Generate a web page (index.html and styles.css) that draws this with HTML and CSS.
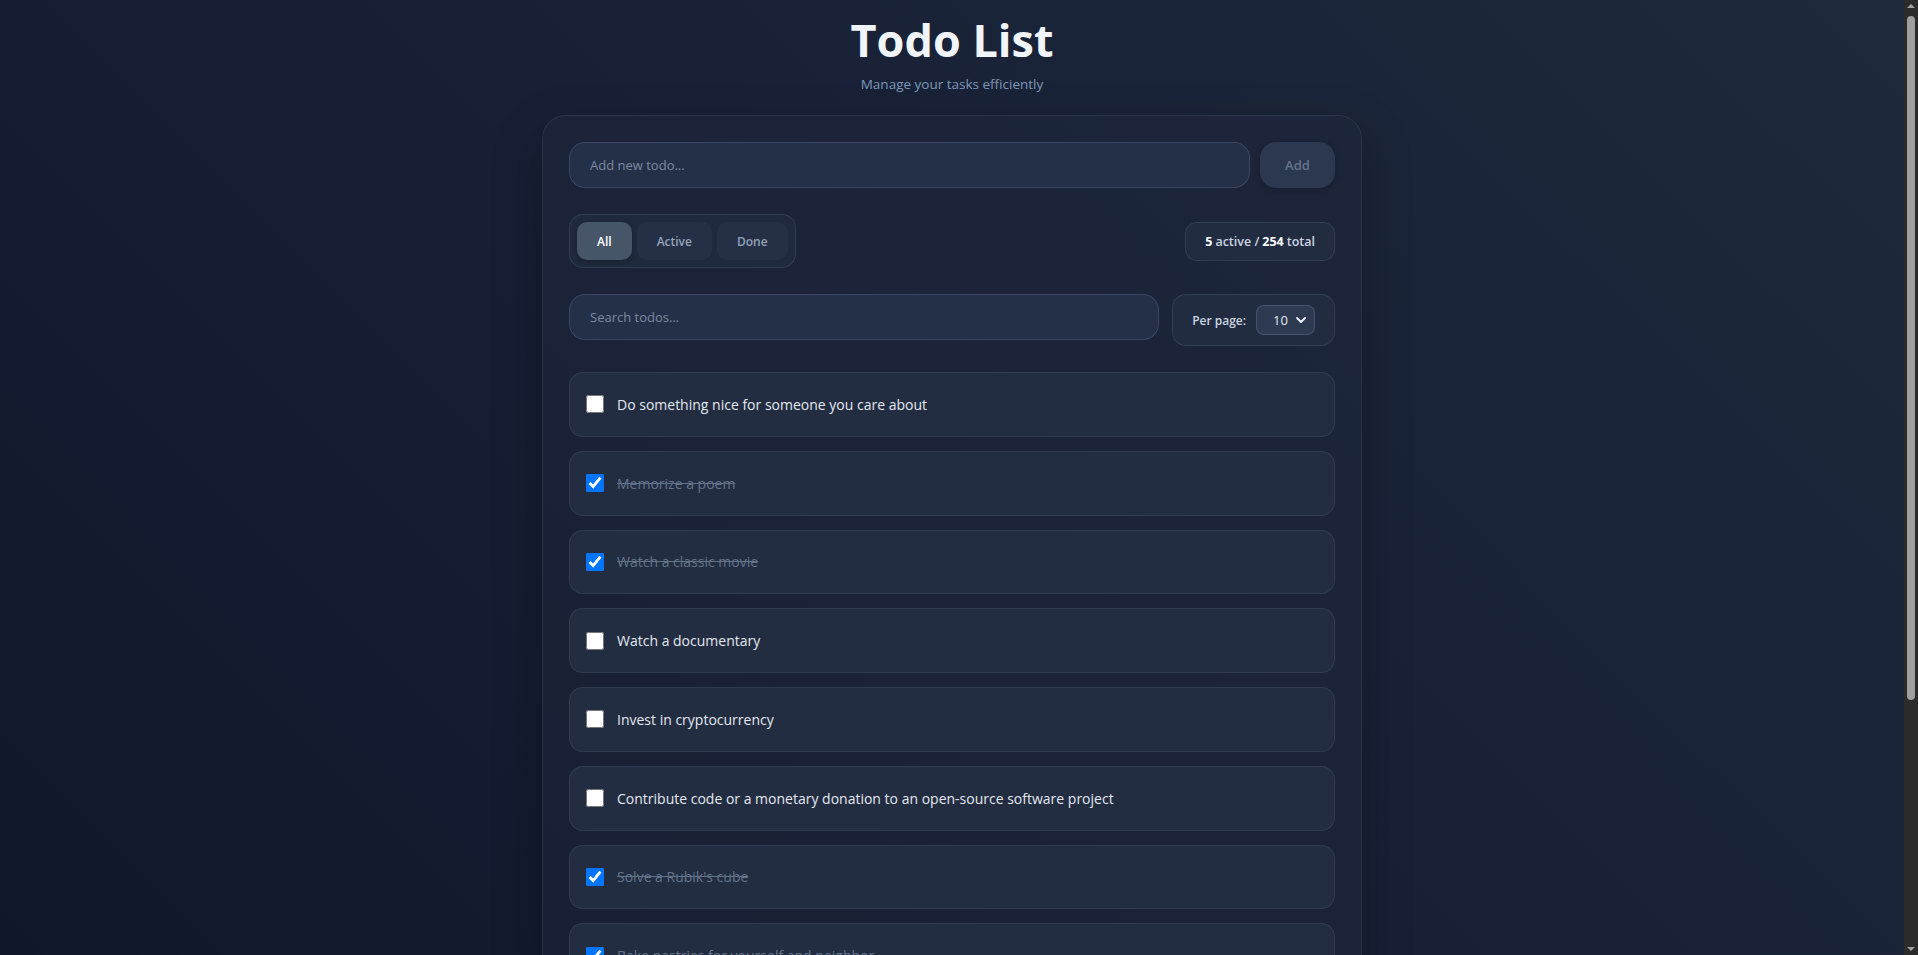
FILE: index.html
```html
<!DOCTYPE html>
<html lang="en">
<head>
<meta charset="utf-8">
<title>Todo List</title>
<link rel="stylesheet" href="styles.css">
</head>
<body>
<div class="page">
  <header class="header">
    <h1 class="title">Todo List</h1>
    <p class="subtitle">Manage your tasks efficiently</p>
  </header>
  <main class="card">
    <div class="add-row">
      <input class="text-input" type="text" placeholder="Add new todo...">
      <button class="add-btn" type="button">Add</button>
    </div>
    <div class="filter-row">
      <div class="filters">
        <button class="filter-btn is-active" type="button">All</button>
        <button class="filter-btn" type="button">Active</button>
        <button class="filter-btn" type="button">Done</button>
      </div>
      <div class="stats"><strong>5</strong> active / <strong>254</strong> total</div>
    </div>
    <div class="search-row">
      <input class="text-input" type="text" placeholder="Search todos...">
      <div class="per-page">
        <label class="per-page-label" for="pp">Per page:</label>
        <div class="select-wrap">
          <select id="pp" class="select">
            <option>5</option>
            <option selected>10</option>
            <option>20</option>
            <option>50</option>
          </select>
          <svg class="chevron" viewBox="0 0 10 6" width="10" height="6" aria-hidden="true"><path d="M1 1l4 4 4-4" fill="none" stroke="#f1f5f9" stroke-width="1.8" stroke-linecap="round" stroke-linejoin="round"/></svg>
        </div>
      </div>
    </div>
    <ul class="list">
      <li class="item"><input type="checkbox" class="check"><span class="item-text">Do something nice for someone you care about</span></li>
      <li class="item is-done"><input type="checkbox" class="check" checked><span class="item-text">Memorize a poem</span></li>
      <li class="item is-done"><input type="checkbox" class="check" checked><span class="item-text">Watch a classic movie</span></li>
      <li class="item"><input type="checkbox" class="check"><span class="item-text">Watch a documentary</span></li>
      <li class="item"><input type="checkbox" class="check"><span class="item-text">Invest in cryptocurrency</span></li>
      <li class="item"><input type="checkbox" class="check"><span class="item-text">Contribute code or a monetary donation to an open-source software project</span></li>
      <li class="item is-done"><input type="checkbox" class="check" checked><span class="item-text">Solve a Rubik's cube</span></li>
      <li class="item is-done"><input type="checkbox" class="check" checked><span class="item-text">Bake pastries for yourself and neighbor</span></li>
      <li class="item"><input type="checkbox" class="check"><span class="item-text">Go see a Broadway production</span></li>
      <li class="item is-done"><input type="checkbox" class="check" checked><span class="item-text">Write a thank you letter to an influential person in your life</span></li>
    </ul>
    <div class="pager">
      <button class="pager-btn" type="button" disabled>Previous</button>
      <span class="pager-info">Page 1 of 26</span>
      <button class="pager-btn" type="button">Next</button>
    </div>
  </main>
</div>
<div class="fake-scrollbar" aria-hidden="true">
  <span class="sb-arrow sb-up"></span>
  <span class="sb-thumb"></span>
  <span class="sb-arrow sb-down"></span>
</div>
</body>
</html>
```
FILE: styles.css
```css
html {
  color-scheme: dark;
}
* {
  box-sizing: border-box;
}
body {
  margin: 0;
  min-height: 100vh;
  font-family: "Segoe UI", "Open Sans", "Noto Sans", sans-serif;
  color: #e2e8f0;
  background: linear-gradient(45deg, #0f172a 0%, #172036 50%, #1e293b 100%) fixed;
}
.page {
  padding: 10px 14px 40px 0;
}
.header {
  text-align: center;
}
.title {
  margin: 0;
  font-size: 45px;
  font-weight: 700;
  color: #f1f5f9;
  line-height: 60px;
}
.subtitle {
  margin: 5px 0 0;
  font-size: 13.5px;
  line-height: 18px;
  color: #7f96b8;
}
.card {
  width: 820px;
  margin: 22px auto 0;
  padding: 26px;
  border: 1px solid rgba(148, 163, 184, 0.12);
  border-radius: 24px;
  background: rgba(30, 41, 59, 0.45);
  box-shadow: 0 20px 50px rgba(0, 0, 0, 0.25);
}
.add-row {
  display: flex;
  gap: 10px;
  margin-bottom: 26px;
}
.text-input {
  flex: 1;
  height: 46px;
  padding: 0 20px;
  border: 1px solid rgba(100, 116, 139, 0.35);
  border-radius: 16px;
  background: #243047;
  color: #e2e8f0;
  font: inherit;
  font-size: 13px;
  outline: none;
}
.text-input::placeholder {
  color: #7d8aa1;
}
.add-btn {
  width: 75px;
  height: 46px;
  border: 0;
  border-radius: 16px;
  background: #2c3850;
  color: #64748b;
  font: inherit;
  font-size: 13px;
  font-weight: 600;
  box-shadow: 0 2px 6px rgba(0, 0, 0, 0.2);
}
.filter-row {
  display: flex;
  align-items: center;
  justify-content: space-between;
  margin-bottom: 26px;
}
.filters {
  display: flex;
  gap: 5px;
  padding: 7px;
  border: 1px solid rgba(100, 116, 139, 0.25);
  border-radius: 14px;
  background: #1f2a3e;
}
.filter-btn {
  height: 38px;
  padding: 0 20px;
  border: 0;
  border-radius: 10px;
  background: #253047;
  color: #94a3b8;
  font: inherit;
  font-size: 12px;
  font-weight: 600;
}
.filter-btn.is-active {
  background: #475569;
  color: #ffffff;
  box-shadow: 0 2px 6px rgba(0, 0, 0, 0.25);
}
.stats {
  height: 39px;
  display: flex;
  align-items: center;
  gap: 3px;
  padding: 0 19px;
  border: 1px solid rgba(100, 116, 139, 0.25);
  border-radius: 12px;
  background: #212c40;
  color: #cbd5e1;
  font-size: 12.5px;
  font-weight: 600;
}
.stats strong {
  color: #ffffff;
  font-weight: 700;
}
.search-row {
  display: flex;
  align-items: flex-start;
  gap: 13px;
  margin-bottom: 26px;
}
.per-page {
  height: 52px;
  display: flex;
  align-items: center;
  gap: 10px;
  padding: 0 19px;
  border: 1px solid rgba(100, 116, 139, 0.25);
  border-radius: 14px;
  background: #212c40;
}
.per-page-label {
  font-size: 12px;
  font-weight: 600;
  color: #cbd5e1;
}
.select-wrap {
  position: relative;
}
.select {
  appearance: none;
  width: 59px;
  height: 30px;
  padding: 0 0 0 16px;
  border: 1px solid rgba(100, 116, 139, 0.45);
  border-radius: 8px;
  background: #2d3a52;
  color: #e2e8f0;
  font: inherit;
  font-size: 13px;
}
.chevron {
  position: absolute;
  right: 9px;
  top: 12px;
  pointer-events: none;
}
.list {
  list-style: none;
  margin: 0;
  padding: 0;
  display: flex;
  flex-direction: column;
  gap: 14px;
}
.item {
  height: 64.75px;
  display: flex;
  align-items: center;
  gap: 13px;
  padding: 0 16px;
  border: 1px solid rgba(100, 116, 139, 0.22);
  border-radius: 14px;
  background: #222d41;
}
.check {
  width: 18px;
  height: 18px;
  margin: 0;
  accent-color: #0075ff;
  color-scheme: light;
}
.item-text {
  font-size: 14px;
  color: #e2e8f0;
}
.item.is-done .item-text {
  color: #64748b;
  text-decoration: line-through;
}
.pager {
  display: flex;
  align-items: center;
  justify-content: space-between;
  margin-top: 26px;
}
.pager-btn {
  height: 40px;
  padding: 0 20px;
  border: 1px solid rgba(100, 116, 139, 0.25);
  border-radius: 12px;
  background: #253047;
  color: #cbd5e1;
  font: inherit;
  font-size: 12px;
  font-weight: 600;
}
.pager-btn:disabled {
  color: #64748b;
}
.pager-info {
  font-size: 12px;
  color: #94a3b8;
}
.fake-scrollbar {
  position: fixed;
  top: 0;
  right: 0;
  width: 14px;
  height: 100vh;
  background: #2b2b2b;
}
.sb-thumb {
  position: absolute;
  left: 3px;
  top: 16px;
  width: 8px;
  height: 684px;
  border-radius: 4px;
  background: #9f9f9f;
}
.sb-arrow {
  position: absolute;
  left: 3px;
  width: 0;
  height: 0;
  border-left: 4px solid transparent;
  border-right: 4px solid transparent;
}
.sb-up {
  top: 4px;
  border-bottom: 4px solid #9f9f9f;
}
.sb-down {
  bottom: 4px;
  border-top: 4px solid #9f9f9f;
}
```
